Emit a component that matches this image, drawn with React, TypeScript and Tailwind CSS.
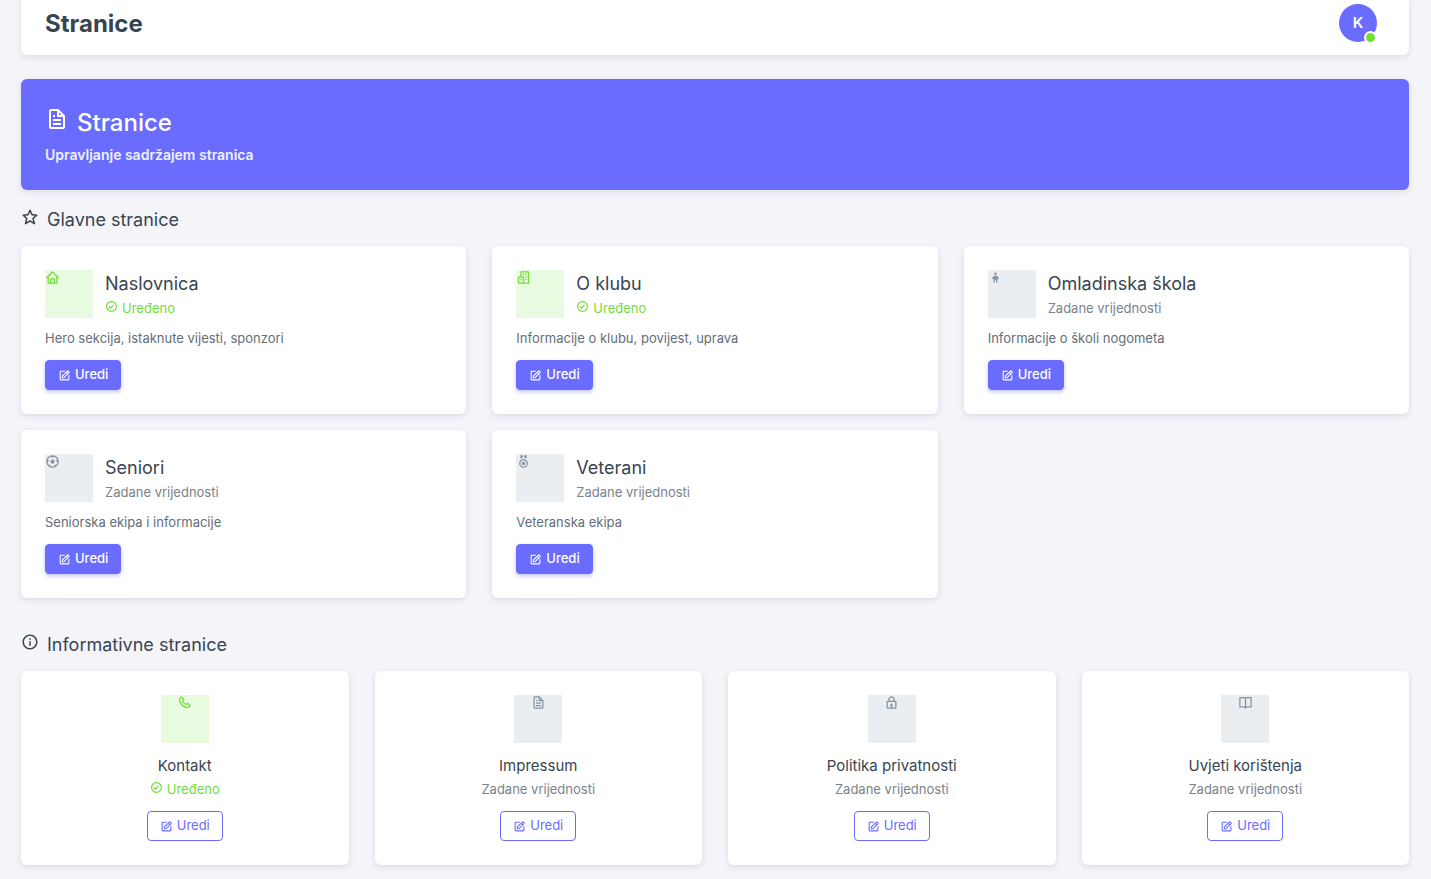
import type { IconType } from "react-icons";
import {
  BiBookOpen,
  BiBuildings,
  BiCheckCircle,
  BiChild,
  BiEdit,
  BiFile,
  BiFootball,
  BiHome,
  BiInfoCircle,
  BiLock,
  BiMedal,
  BiPhone,
  BiStar,
} from "react-icons/bi";
import clsx from "clsx";

type PageItem = {
  title: string;
  icon: IconType;
  edited: boolean;
  description?: string;
};

const mainPages: PageItem[] = [
  { title: "Naslovnica", icon: BiHome, edited: true, description: "Hero sekcija, istaknute vijesti, sponzori" },
  { title: "O klubu", icon: BiBuildings, edited: true, description: "Informacije o klubu, povijest, uprava" },
  { title: "Omladinska škola", icon: BiChild, edited: false, description: "Informacije o školi nogometa" },
  { title: "Seniori", icon: BiFootball, edited: false, description: "Seniorska ekipa i informacije" },
  { title: "Veterani", icon: BiMedal, edited: false, description: "Veteranska ekipa" },
];

const infoPages: PageItem[] = [
  { title: "Kontakt", icon: BiPhone, edited: true },
  { title: "Impressum", icon: BiFile, edited: false },
  { title: "Politika privatnosti", icon: BiLock, edited: false },
  { title: "Uvjeti korištenja", icon: BiBookOpen, edited: false },
];

function IconTile({ page, centered = false }: { page: PageItem; centered?: boolean }) {
  const Icon = page.icon;
  return (
    <div
      className={clsx(
        "flex size-12 shrink-0 items-start",
        centered && "justify-center",
        page.edited ? "bg-[#e8fadf] text-[#71dd37]" : "bg-[#ebeef0] text-[#8592a3]",
      )}
    >
      <Icon className="size-[15px]" />
    </div>
  );
}

function Status({ edited }: { edited: boolean }) {
  if (!edited) {
    return <small className="block text-[13px] leading-5 text-[#7a828a]">Zadane vrijednosti</small>;
  }
  return (
    <small className="flex items-start gap-1 text-[13px] leading-5 text-[#71dd37]">
      <BiCheckCircle className="mt-0.5 size-[13px]" />
      Uređeno
    </small>
  );
}

function EditButton({ outline = false }: { outline?: boolean }) {
  return (
    <button
      type="button"
      className={clsx(
        "flex h-[30px] items-center gap-1 rounded border border-[#696cff] px-3 text-[13px]",
        outline
          ? "bg-white text-[#696cff]"
          : "bg-[#696cff] font-medium text-white shadow-[0_2px_4px_0_rgba(105,108,255,0.4)]",
      )}
    >
      <BiEdit className="size-[13px]" />
      Uredi
    </button>
  );
}

function SectionTitle({ icon: Icon, children }: { icon: IconType; children: string }) {
  return (
    <h5 className="flex items-start gap-2 text-lg leading-6 text-[#384551]">
      <Icon className="size-[18px]" />
      {children}
    </h5>
  );
}

const cardShadow = "shadow-[0_2px_6px_0_rgba(67,89,113,0.14)]";

export default function App() {
  return (
    <div className="min-h-screen bg-[#f4f4f9] pr-[22px] pb-[14px] pl-[21px] font-['Inter','Liberation_Sans',sans-serif] text-[#646e78]">
      <header className={clsx("flex items-start justify-between rounded-b-md bg-white pt-1 pr-8 pb-[11px] pl-6", cardShadow)}>
        <h1 className="text-2xl leading-10 font-bold text-[#384551]">Stranice</h1>
        <button
          type="button"
          className="relative flex size-[38px] items-center justify-center rounded-full bg-[#696cff] text-[15px] font-semibold text-white"
        >
          K
          <span className="absolute right-0 -bottom-0.5 size-[13px] rounded-full border-2 border-white bg-[#71dd37]" />
        </button>
      </header>

      <main>
        <section className={clsx("mt-6 rounded-md bg-[#696cff] p-6 text-white", cardShadow)}>
          <h2 className="flex items-start gap-2 pt-1 text-2xl leading-8 font-medium">
            <BiFile className="size-6" />
            Stranice
          </h2>
          <p className="mt-1 text-sm leading-[23px] font-semibold text-white/90">Upravljanje sadržajem stranica</p>
        </section>

        <section className="mt-[18px]">
          <SectionTitle icon={BiStar}>Glavne stranice</SectionTitle>
          <div className="mt-[14px] grid grid-cols-3 gap-x-[26px] gap-y-4">
            {mainPages.map((page) => (
              <article key={page.title} className={clsx("rounded-md bg-white p-6", cardShadow)}>
                <div className="flex items-start gap-3">
                  <IconTile page={page} />
                  <div>
                    <h6 className="text-lg leading-7 text-[#384551]">{page.title}</h6>
                    <Status edited={page.edited} />
                  </div>
                </div>
                <p className="mt-[10px] mb-3 text-[13px] leading-5">{page.description}</p>
                <EditButton />
              </article>
            ))}
          </div>
        </section>

        <section className="mt-[35px]">
          <SectionTitle icon={BiInfoCircle}>Informativne stranice</SectionTitle>
          <div className="mt-[14px] grid grid-cols-4 gap-x-[26px] gap-y-4">
            {infoPages.map((page) => (
              <article
                key={page.title}
                className={clsx("flex flex-col items-center rounded-md bg-white p-6", cardShadow)}
              >
                <IconTile page={page} centered />
                <h6 className="mt-3 text-[15px] leading-[22px] text-[#384551]">{page.title}</h6>
                <div className="mt-0.5 mb-3">
                  <Status edited={page.edited} />
                </div>
                <EditButton outline />
              </article>
            ))}
          </div>
        </section>
      </main>
    </div>
  );
}
